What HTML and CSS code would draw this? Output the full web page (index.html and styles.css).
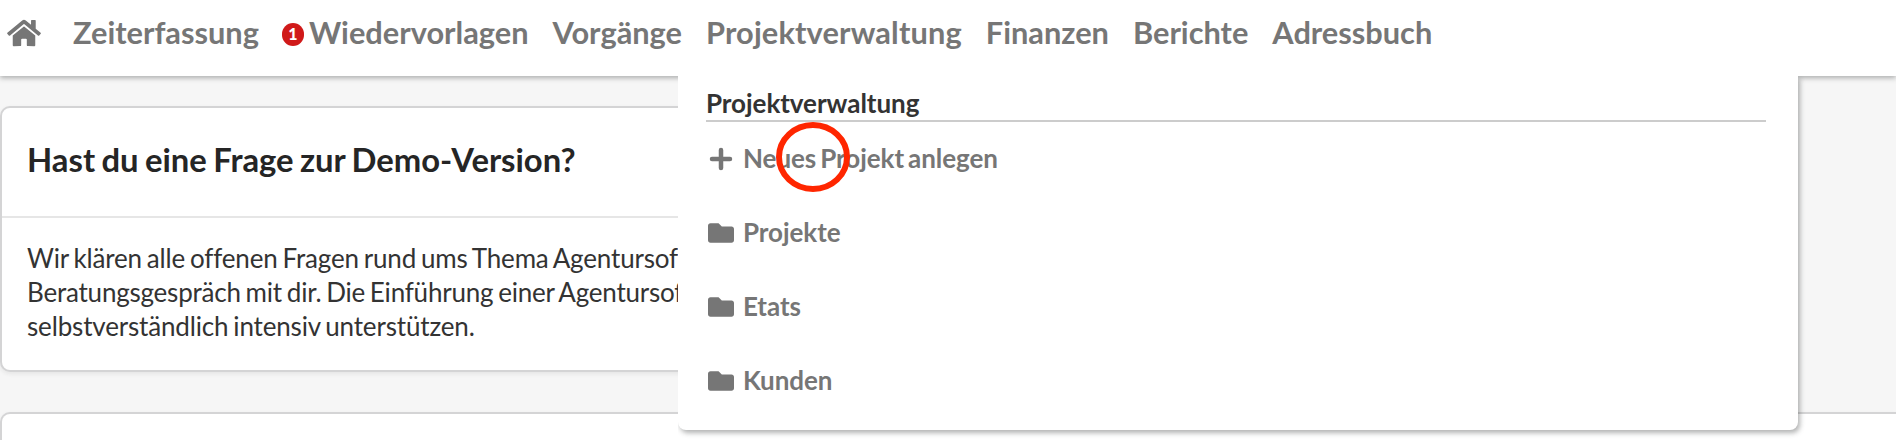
FILE: index.html
```html
<!DOCTYPE html>
<html lang="de">
<head>
<meta charset="utf-8">
<title>Projektverwaltung</title>
<link rel="stylesheet" href="styles.css">
</head>
<body>
<header class="topbar">
  <nav class="nav">
    <a class="nav-home"><svg class="home-icon" viewBox="0 0 576 512"><path d="M280.37 148.26L96 300.11V464a16 16 0 0 0 16 16l112.06-.29a16 16 0 0 0 15.92-16V368a16 16 0 0 1 16-16h64a16 16 0 0 1 16 16v95.64a16 16 0 0 0 16 16.05L464 480a16 16 0 0 0 16-16V300L295.67 148.26a12.19 12.19 0 0 0-15.3 0zM571.6 251.47L488 182.56V44.05a12 12 0 0 0-12-12h-56a12 12 0 0 0-12 12v72.61L318.47 43a48 48 0 0 0-61 0L4.34 251.47a12 12 0 0 0-1.6 16.9l25.5 31A12 12 0 0 0 45.15 301l235.22-193.74a12.19 12.19 0 0 1 15.3 0L530.9 301a12 12 0 0 0 16.9-1.6l25.5-31a12 12 0 0 0-1.7-16.93z"/></svg></a>
    <a class="nav-link">Zeiterfassung</a>
    <a class="nav-link"><span class="count">1</span>Wiedervorlagen</a>
    <a class="nav-link">Vorgänge</a>
    <a class="nav-link nav-active">Projektverwaltung</a>
    <a class="nav-link">Finanzen</a>
    <a class="nav-link">Berichte</a>
    <a class="nav-link">Adressbuch</a>
  </nav>
  <section class="menu">
    <h2 class="menu-title">Projektverwaltung</h2>
    <ul class="menu-list">
      <li class="menu-item"><svg class="menu-icon" viewBox="0 0 26 26"><path class="plus" d="M13 4v18M4 13h18"/></svg>Neues Projekt anlegen</li>
      <li class="menu-item"><svg class="menu-icon" viewBox="0 0 512 512"><use href="#folder"/></svg>Projekte</li>
      <li class="menu-item"><svg class="menu-icon" viewBox="0 0 512 512"><use href="#folder"/></svg>Etats</li>
      <li class="menu-item"><svg class="menu-icon" viewBox="0 0 512 512"><use href="#folder"/></svg>Kunden</li>
    </ul>
    <svg class="marker" viewBox="0 0 74 70"><ellipse cx="37" cy="35" rx="34" ry="32"/></svg>
  </section>
</header>
<main class="content">
  <article class="card card-question">
    <h1 class="card-title">Hast du eine Frage zur Demo-Version?</h1>
    <p class="card-text">Wir klären alle offenen Fragen rund ums Thema Agentursoft<br><span class="tight">Beratungsgespräch mit dir. Die Einführung einer Agentursoft</span><br>selbstverständlich intensiv unterstützen.</p>
  </article>
  <article class="card card-next"></article>
</main>
<svg class="defs"><defs><path id="folder" d="M464 128H272l-64-64H48C21.49 64 0 85.49 0 112v288c0 26.51 21.49 48 48 48h416c26.51 0 48-21.49 48-48V176c0-26.51-21.49-48-48-48z"/></defs></svg>
</body>
</html>
```
FILE: styles.css
```css
* { box-sizing: border-box; }
body {
  margin: 0;
  height: 440px;
  overflow: hidden;
  background: #f6f6f6;
  color: #333;
  font-family: Lato, "Liberation Sans", sans-serif;
}
.topbar {
  position: relative;
  z-index: 2;
  height: 76px;
  background: #fff;
  box-shadow: 0 2px 5px rgba(34, 36, 38, .35);
}
.nav { display: flex; align-items: center; height: 65px; padding-left: 7px; gap: 24px; }
.nav-home { display: flex; width: 42px; padding-top: 1px; }
.home-icon { width: 34px; height: 30px; fill: #767676; }
.nav-link { display: flex; align-items: center; color: #767676; font-size: 30.75px; font-weight: 700; line-height: 36px; }
.nav-active { letter-spacing: .15px; }
.count {
  width: 22px; height: 23px; margin: 3px 5px 0 -1px;
  border-radius: 11px;
  background: #d01919; color: #fff;
  font-size: 16px; font-weight: 900; line-height: 22px; text-align: center;
}
.menu {
  position: absolute; left: 678px; top: 76px;
  width: 1120px; height: 354px;
  padding: 9px 32px 0 28px;
  background: #fff;
  border-radius: 0 0 8px 8px;
  box-shadow: 2px 3px 5px rgba(34, 36, 38, .35);
  clip-path: inset(0 -12px -12px 0);
}
.menu-title { margin: 0; height: 37px; border-bottom: 2px solid #ccc; font-size: 26px; line-height: 36px; letter-spacing: -.05px; }
.menu-list { margin: 0; padding: 0; list-style: none; }
.menu-item { display: flex; align-items: center; height: 74px; padding-bottom: 2px; color: #767676; font-size: 26px; font-weight: 700; letter-spacing: -.06px; word-spacing: -2.2px; }
.menu-icon { width: 26px; height: 26px; margin: 2px 9px 0 2px; fill: #767676; }
.plus { stroke: #767676; stroke-width: 4.5; stroke-linecap: round; }
.marker { position: absolute; left: 98px; top: 46px; width: 74px; height: 70px; fill: none; stroke: #ff2600; stroke-width: 6; }
.content { height: 364px; padding-top: 30px; overflow: hidden; }
.card {
  height: 266px; margin-bottom: 40px;
  background: #fff;
  border: 2px solid #d4d4d5;
  border-radius: 10px;
  box-shadow: 0 2px 4px rgba(34, 36, 38, .08);
}
.card-question { width: 1240px; }
.card-next { border-right: 0; border-top-right-radius: 0; }
.card-title { margin: 0; height: 110px; padding-left: 25px; border-bottom: 2px solid #e6e6e6; color: #252525; font-size: 32.8px; line-height: 104px; word-spacing: -1.6px; }
.card-text { width: 676px; margin: 0; padding: 23px 0 0 25px; overflow: hidden; font-size: 26px; line-height: 34px; letter-spacing: -.16px; word-spacing: -1.6px; white-space: nowrap; font-variant-ligatures: common-ligatures; }
.tight { letter-spacing: -.21px; }
.defs { display: none; }
```
